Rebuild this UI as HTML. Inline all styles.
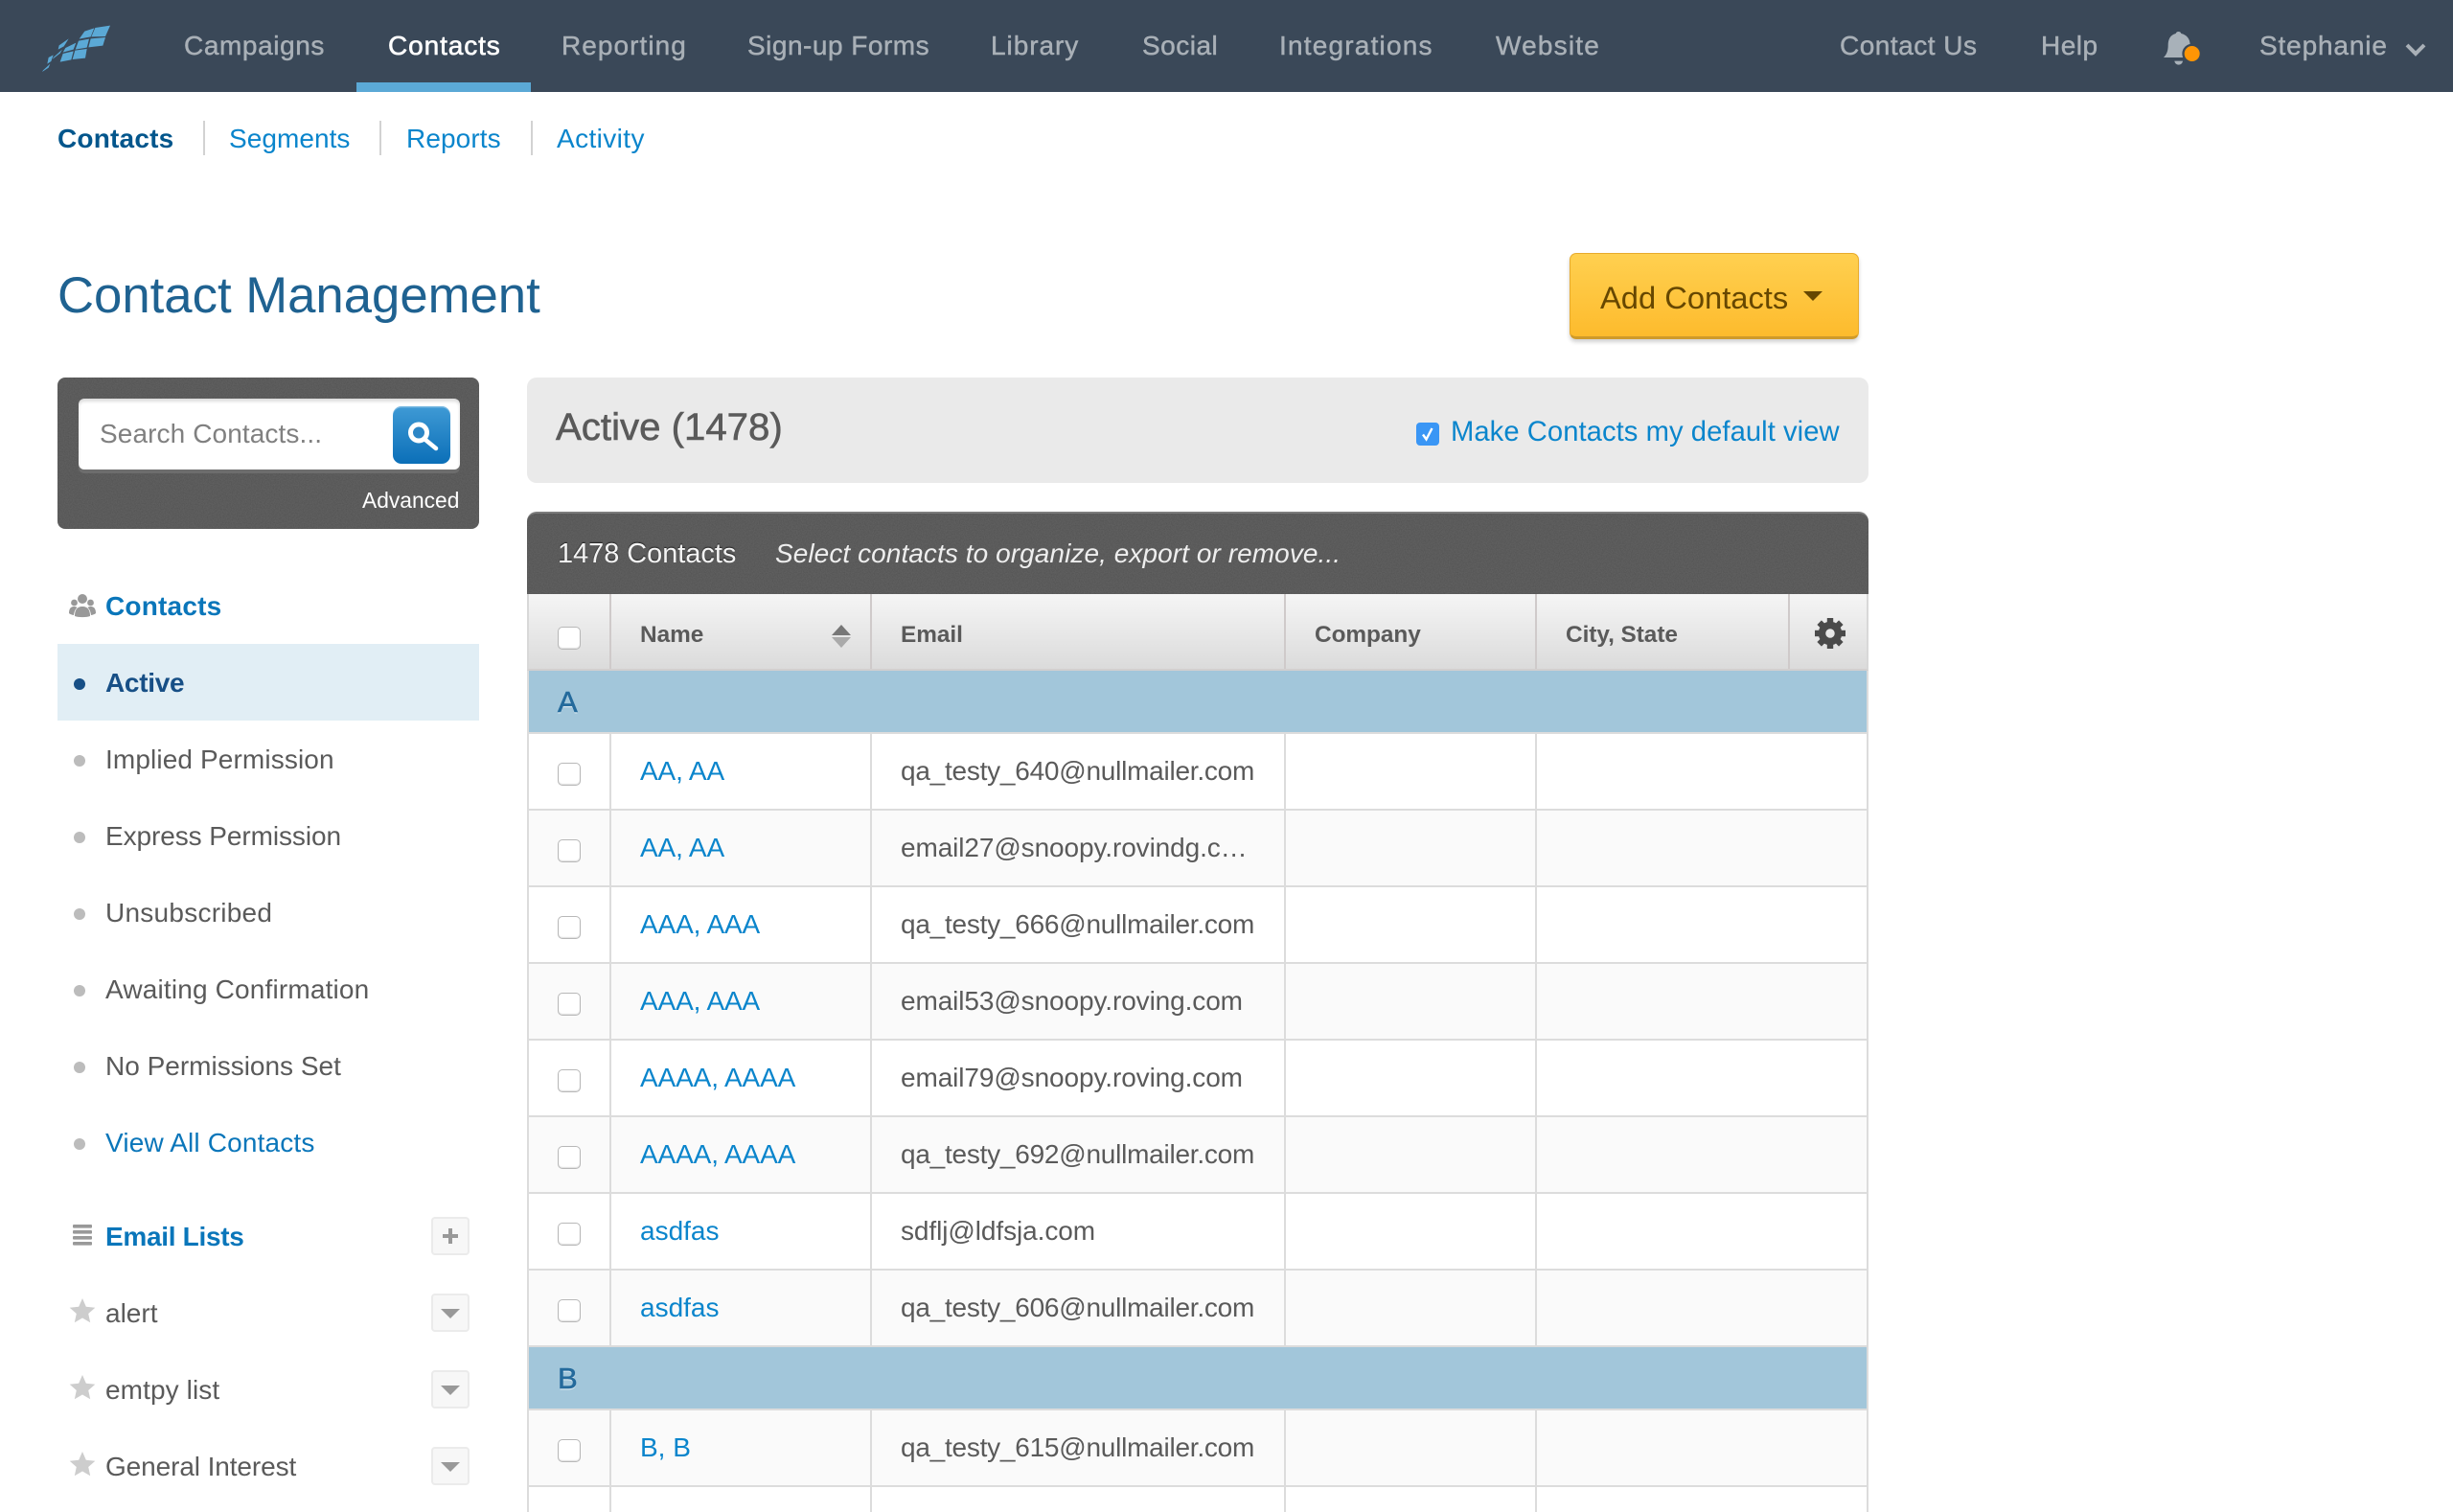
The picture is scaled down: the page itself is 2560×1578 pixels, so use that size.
<!DOCTYPE html>
<html lang="en"><head><meta charset="utf-8"><title>Contact Management</title>
<style>
html,body{margin:0;padding:0;background:#fff;width:2560px;height:1578px;overflow:hidden}
body{position:relative;font-family:"Liberation Sans",sans-serif;color:#5a5a5a}
#p{position:absolute;left:0;top:0;width:2560px;height:1578px;overflow:hidden;background:#fff}
#p div,#p a,#p span,#p svg{position:absolute;box-sizing:border-box}
.t{white-space:nowrap;line-height:40px;font-size:28px;text-decoration:none}
.nav{top:28px;color:#a9b0b7;letter-spacing:.5px;-webkit-text-stroke:.45px #a9b0b7}
.lnk{color:#0a85cc;letter-spacing:-.12px}
.e{letter-spacing:-.24px}
.b{font-weight:700}
.hd{color:#0a76ba;font-weight:700}
.dot{left:77px;width:12px;height:12px;border-radius:50%;background:#bcbcbc}
.sb{left:450px;width:40px;height:40px;background:#f7f7f7;border:2px solid #ebebeb;border-radius:4px}
.car{left:8px;top:14px;width:0;height:0;border-left:10px solid transparent;border-right:10px solid transparent;border-top:10px solid #999}
.v{width:2px;background:#dcdcdc}
.row{left:552px;width:1396px;height:80px;border-bottom:2px solid #dcdcdc;background:#fff}
.row.g{background:#fafafa}
.cb{left:582px;width:24px;height:24px;background:#fff;border:1.5px solid #b8b8b8;border-radius:5px;box-shadow:inset 0 -1px 1px #e0e0e0}
.th{top:643px;font-size:24.4px;font-weight:700;color:#5a5a5a;letter-spacing:-.05px}
.grp{left:552px;width:1396px;background:#a2c6da}
.gl{font-size:31px;color:#246a9c;text-shadow:0 1.5px 0 rgba(255,255,255,.55);-webkit-text-stroke:.6px #246a9c}
.sep{top:126px;width:2px;height:36px;background:#d2d2d2}
</style></head><body>
<div id="p">

<svg width="0" height="0" style="left:0;top:0"><filter id="n"><feTurbulence type="fractalNoise" baseFrequency=".8" numOctaves="2" seed="3"/><feColorMatrix values="0 0 0 0 0 0 0 0 0 0 0 0 0 0 0 0 0 0 .2 -.06"/></filter></svg>

<!-- top nav -->
<div style="left:0;top:0;width:2560px;height:96px;background:#3a4858"></div>
<svg style="left:20px;top:10px" width="120" height="80" viewBox="0 0 360 240"><g fill="#5ba9d6">
<polygon points="238,57 285,50 270,84 226,85"/><polygon points="205,68 235,58 224,85 188,92"/>
<polygon points="224,91 270,87 262,113 217,118"/><polygon points="186,98 219,92 212,119 176,125"/>
<polygon points="175,128 212,123 207,152 167,156"/><polygon points="145,120 178,104 170,125 137,134"/>
<polygon points="137,138 170,130 163,157 128,164"/><polygon points="125,112 155,91 140,115 122,125"/>
<polygon points="107,150 135,125 128,137 105,155"/><polygon points="92,150 107,142 100,162 88,170"/>
<polygon points="75,190 97,170 92,182 72,195"/></g></svg>
<div style="left:372px;top:86px;width:182px;height:10px;background:#5ba9d6"></div>
<a class="t nav" style="left:192px;letter-spacing:.6px">Campaigns</a>
<a class="t nav" style="left:405px;color:#fff;-webkit-text-stroke:.6px #fff;letter-spacing:.9px">Contacts</a>
<a class="t nav" style="left:586px;letter-spacing:1.05px">Reporting</a>
<a class="t nav" style="left:780px">Sign-up Forms</a>
<a class="t nav" style="left:1034px;letter-spacing:.95px">Library</a>
<a class="t nav" style="left:1192px">Social</a>
<a class="t nav" style="left:1335px;letter-spacing:1.2px">Integrations</a>
<a class="t nav" style="left:1561px;letter-spacing:1.2px">Website</a>
<a class="t nav" style="left:1920px">Contact Us</a>
<a class="t nav" style="left:2130px">Help</a>
<a class="t nav" style="left:2358px;letter-spacing:.85px">Stephanie</a>
<svg style="left:2240px;top:20px" width="90" height="60" viewBox="0 0 270 180">
<path fill="#a8b1b9" d="M92 45a9 9 0 0 1 17 0c18 4 28 18 28 36v15l0 24H54c10-10 14-22 14-38 0-18 6-32 24-37z"/>
<path fill="#a8b1b9" d="M88 131h26c-2 16-24 16-26 0z"/>
<circle cx="143" cy="108" r="31" fill="#3a4858"/><circle cx="143" cy="108" r="24" fill="#ff9505"/></svg>
<svg style="left:2508px;top:42px" width="26" height="18" viewBox="0 0 26 18"><path d="M4 5l9 9 9-9" fill="none" stroke="#a9b0b7" stroke-width="4"/></svg>

<!-- sub nav -->
<a class="t b" style="left:60px;top:125px;color:#03568c;letter-spacing:.2px">Contacts</a>
<div class="sep" style="left:212px"></div>
<a class="t" style="left:239px;top:125px;color:#0a85cc;letter-spacing:.05px">Segments</a>
<div class="sep" style="left:396px"></div>
<a class="t" style="left:424px;top:125px;color:#0a85cc;letter-spacing:.1px">Reports</a>
<div class="sep" style="left:554px"></div>
<a class="t" style="left:581px;top:125px;color:#0a85cc;letter-spacing:.4px">Activity</a>

<div class="t" style="left:60px;top:289px;font-size:52.7px;color:#1f6291">Contact Management</div>

<!-- add contacts -->
<div style="left:1638px;top:264px;width:302px;height:90px;border-radius:7px;background:linear-gradient(#ffd050,#fdbb2d);border:1.5px solid #e8ab2c;border-bottom:3px solid #cf9a2a;box-shadow:0 3px 4px rgba(0,0,0,.18)"></div>
<a class="t" style="left:1670px;top:291px;font-size:32.7px;color:#664700">Add Contacts</a>
<div style="left:1882px;top:304px;width:0;height:0;border-left:10px solid transparent;border-right:10px solid transparent;border-top:10px solid #664700"></div>

<!-- search -->
<div style="left:60px;top:394px;width:440px;height:158px;border-radius:8px;background:#5f5f5f;overflow:hidden"><svg width="440" height="158" style="left:0;top:0"><rect width="440" height="158" filter="url(#n)"/></svg></div>
<div style="left:82px;top:416px;width:398px;height:74px;border-radius:6px;background:#fff;box-shadow:inset 0 3px 3px rgba(0,0,0,.14),0 4px 0 #6d6d6d"></div>
<div class="t" style="left:104px;top:433px;color:#808080;letter-spacing:.1px">Search Contacts...</div>
<div style="left:410px;top:424px;width:60px;height:60px;border-radius:9px;background:linear-gradient(#3f9ad5,#0b6fb8);box-shadow:inset 0 1.5px 0 rgba(255,255,255,.3)"></div>
<svg style="left:410px;top:424px" width="60" height="60"><circle cx="27" cy="27.5" r="8.5" fill="#2c86c6" stroke="#fff" stroke-width="5"/><path d="M34 35l11 9" stroke="#fff" stroke-width="4.5" stroke-linecap="round"/></svg>
<a class="t" style="left:378px;top:502px;font-size:22.8px;color:#fff">Advanced</a>

<!-- sidebar -->
<svg style="left:70px;top:618px" width="32" height="28" viewBox="70 618 32 28"><g fill="#999"><circle cx="86" cy="625" r="5"/><circle cx="77.5" cy="629" r="3.4"/><circle cx="94.5" cy="629" r="3.4"/><path d="M78 643c0-7 3-10 8-10s8 3 8 10c-4 1.500-12 1.500-16 0z"/><path d="M72 640c0-5 2-7 5.500-7 1.500 0 2.500.5 3 1-2 2-3 4-3.500 8-2-.3-4-1-5-2z"/><path d="M100 640c0-5-2-7-5.500-7-1.500 0-2.500.5-3 1 2 2 3 4 3.500 8 2-.3 4-1 5-2z"/></g></svg>
<a class="t hd" style="left:110px;top:613px;letter-spacing:.2px">Contacts</a>
<div style="left:60px;top:672px;width:440px;height:80px;background:#e1eef5"></div>
<div class="dot" style="top:708px;background:#174f86"></div>
<a class="t b" style="left:110px;top:693px;color:#174f86;letter-spacing:-.3px">Active</a>
<div class="dot" style="top:788px"></div><a class="t" style="left:110px;top:773px;color:#5a5a5a;letter-spacing:.12px">Implied Permission</a>
<div class="dot" style="top:868px"></div><a class="t" style="left:110px;top:853px;color:#5a5a5a;letter-spacing:-.08px">Express Permission</a>
<div class="dot" style="top:948px"></div><a class="t" style="left:110px;top:933px;color:#5a5a5a;letter-spacing:.25px">Unsubscribed</a>
<div class="dot" style="top:1028px"></div><a class="t" style="left:110px;top:1013px;color:#5a5a5a;letter-spacing:.17px">Awaiting Confirmation</a>
<div class="dot" style="top:1108px"></div><a class="t" style="left:110px;top:1093px;color:#5a5a5a">No Permissions Set</a>
<div class="dot" style="top:1188px"></div><a class="t" style="left:110px;top:1173px;color:#0a76ba;letter-spacing:.16px">View All Contacts</a>

<svg style="left:76px;top:1278px" width="20" height="22"><g fill="#999"><rect width="20" height="3.600" y="0" rx="1"/><rect width="20" height="3.600" y="6" rx="1"/><rect width="20" height="3.600" y="12" rx="1"/><rect width="20" height="3.600" y="18" rx="1"/></g></svg>
<a class="t hd" style="left:110px;top:1271px;letter-spacing:-.3px">Email Lists</a>
<div class="sb" style="top:1270px"></div>
<svg style="left:450px;top:1270px" width="40" height="40"><path d="M20 12v16M12 20h16" stroke="#999" stroke-width="4"/></svg>

<svg style="left:72px;top:1355px" width="28" height="28" viewBox="-14 -14 28 28"><polygon fill="#cdcdcd" points="0,-14 3.800,-5.300 13.300,-4.300 6.200,2 8.200,11.300 0,6.500 -8.200,11.300 -6.200,2 -13.300,-4.300 -3.800,-5.300"/></svg>
<a class="t" style="left:110px;top:1351px;color:#5a5a5a">alert</a>
<div class="sb" style="top:1350px"><div class="car"></div></div>
<svg style="left:72px;top:1435px" width="28" height="28" viewBox="-14 -14 28 28"><polygon fill="#cdcdcd" points="0,-14 3.800,-5.300 13.300,-4.300 6.200,2 8.200,11.300 0,6.500 -8.200,11.300 -6.200,2 -13.300,-4.300 -3.800,-5.300"/></svg>
<a class="t" style="left:110px;top:1431px;color:#5a5a5a;letter-spacing:.1px">emtpy list</a>
<div class="sb" style="top:1430px"><div class="car"></div></div>
<svg style="left:72px;top:1515px" width="28" height="28" viewBox="-14 -14 28 28"><polygon fill="#cdcdcd" points="0,-14 3.800,-5.300 13.300,-4.300 6.200,2 8.200,11.300 0,6.500 -8.200,11.300 -6.200,2 -13.300,-4.300 -3.800,-5.300"/></svg>
<a class="t" style="left:110px;top:1511px;color:#5a5a5a;letter-spacing:-.1px">General Interest</a>
<div class="sb" style="top:1510px"><div class="car"></div></div>

<!-- active panel -->
<div style="left:550px;top:394px;width:1400px;height:110px;border-radius:10px;background:#eaeaea"></div>
<div class="t" style="left:580px;top:426px;font-size:40.2px;color:#5a5a5a;-webkit-text-stroke:.6px #5a5a5a">Active (1478)</div>
<div style="left:1478px;top:441px;width:24px;height:24px;border-radius:4px;background:#3a96f5"></div>
<svg style="left:1478px;top:441px" width="24" height="24"><path d="M7 12.500l3.500 5L16.500 6" fill="none" stroke="#fff" stroke-width="2.400"/></svg>
<a class="t" style="left:1514px;top:431px;font-size:29.2px;color:#0a85cc;letter-spacing:.06px">Make Contacts my default view</a>

<!-- toolbar -->
<div style="left:550px;top:534px;width:1400px;height:86px;border-radius:10px 10px 0 0;background:#5f5f5f;border-top:2px solid #7c7c7c;overflow:hidden"><svg width="1400" height="86" style="left:0;top:0"><rect width="1400" height="86" filter="url(#n)"/></svg></div>
<div class="t" style="left:582px;top:558px;font-size:28.9px;color:#f4f4f4;text-shadow:0 -1px 1px #222">1478 Contacts</div>
<div class="t" style="left:809px;top:558px;font-style:italic;color:#eee;letter-spacing:.07px">Select contacts to organize, export or remove...</div>

<!-- table head -->
<div style="left:550px;top:620px;width:1400px;height:80px;background:linear-gradient(#f5f5f5,#dbdbdb);border-left:2px solid #d8d8d8;border-right:2px solid #d8d8d8;border-bottom:2px solid #d2cfcf"></div>
<div class="v" style="left:636px;top:620px;height:78px;background:#cfcaca"></div>
<div class="v" style="left:908px;top:620px;height:78px;background:#cfcaca"></div>
<div class="v" style="left:1340px;top:620px;height:78px;background:#cfcaca"></div>
<div class="v" style="left:1602px;top:620px;height:78px;background:#cfcaca"></div>
<div class="v" style="left:1866px;top:620px;height:78px;background:#cfcaca"></div>
<div class="cb" style="top:654px"></div>
<div class="t th" style="left:668px">Name</div>
<div style="left:868px;top:652px;width:0;height:0;border-left:10px solid transparent;border-right:10px solid transparent;border-bottom:11px solid #777"></div>
<div style="left:868px;top:665px;width:0;height:0;border-left:10px solid transparent;border-right:10px solid transparent;border-top:11px solid #aaa"></div>
<div class="t th" style="left:940px">Email</div>
<div class="t th" style="left:1372px">Company</div>
<div class="t th" style="left:1634px">City, State</div>
<svg style="left:1892px;top:642px" width="36" height="38" viewBox="-18 -19 36 38"><g fill="#4a4a4a"><rect x="-3.200" y="-16" width="6.400" height="8"/><rect x="-3.200" y="-16" width="6.400" height="8" transform="rotate(45)"/><rect x="-3.200" y="-16" width="6.400" height="8" transform="rotate(90)"/><rect x="-3.200" y="-16" width="6.400" height="8" transform="rotate(135)"/><rect x="-3.200" y="-16" width="6.400" height="8" transform="rotate(180)"/><rect x="-3.200" y="-16" width="6.400" height="8" transform="rotate(225)"/><rect x="-3.200" y="-16" width="6.400" height="8" transform="rotate(270)"/><rect x="-3.200" y="-16" width="6.400" height="8" transform="rotate(315)"/></g><circle r="8.500" fill="none" stroke="#4a4a4a" stroke-width="7.500"/></svg>

<!-- rows -->
<div class="row" style="top:766px"></div>
<div class="row g" style="top:846px"></div>
<div class="row" style="top:926px"></div>
<div class="row g" style="top:1006px"></div>
<div class="row" style="top:1086px"></div>
<div class="row g" style="top:1166px"></div>
<div class="row" style="top:1246px"></div>
<div class="row g" style="top:1326px"></div>
<div class="row g" style="top:1472px"></div>
<div class="row" style="top:1552px;height:26px;border-bottom:0"></div>

<div class="v" style="left:550px;top:700px;height:878px"></div>
<div class="v" style="left:1948px;top:700px;height:878px"></div>
<div class="v" style="left:636px;top:766px;height:812px"></div>
<div class="v" style="left:908px;top:766px;height:812px"></div>
<div class="v" style="left:1340px;top:766px;height:812px"></div>
<div class="v" style="left:1602px;top:766px;height:812px"></div>

<div class="grp" style="top:700px;height:64px"></div>
<div style="left:552px;top:764px;width:1396px;height:2px;background:#dcdcdc"></div>
<div class="t gl" style="left:582px;top:713px">A</div>
<div style="left:552px;top:1404px;width:1396px;height:2px;background:#dcdcdc"></div>
<div class="grp" style="top:1406px;height:64px"></div>
<div style="left:552px;top:1470px;width:1396px;height:2px;background:#dcdcdc"></div>
<div class="t gl" style="left:582px;top:1419px">B</div>

<div class="cb" style="top:796px"></div><a class="t lnk" style="left:668px;top:785px">AA, AA</a><div class="t e" style="left:940px;top:785px">qa_testy_640@nullmailer.com</div>
<div class="cb" style="top:876px"></div><a class="t lnk" style="left:668px;top:865px">AA, AA</a><div class="t e" style="left:940px;top:865px;letter-spacing:-.1px">email27@snoopy.rovindg.c…</div>
<div class="cb" style="top:956px"></div><a class="t lnk" style="left:668px;top:945px">AAA, AAA</a><div class="t e" style="left:940px;top:945px">qa_testy_666@nullmailer.com</div>
<div class="cb" style="top:1036px"></div><a class="t lnk" style="left:668px;top:1025px">AAA, AAA</a><div class="t e" style="left:940px;top:1025px;letter-spacing:-.1px">email53@snoopy.roving.com</div>
<div class="cb" style="top:1116px"></div><a class="t lnk" style="left:668px;top:1105px">AAAA, AAAA</a><div class="t e" style="left:940px;top:1105px;letter-spacing:-.1px">email79@snoopy.roving.com</div>
<div class="cb" style="top:1196px"></div><a class="t lnk" style="left:668px;top:1185px">AAAA, AAAA</a><div class="t e" style="left:940px;top:1185px">qa_testy_692@nullmailer.com</div>
<div class="cb" style="top:1276px"></div><a class="t lnk" style="left:668px;top:1265px;letter-spacing:0">asdfas</a><div class="t e" style="left:940px;top:1265px;letter-spacing:-.08px">sdflj@ldfsja.com</div>
<div class="cb" style="top:1356px"></div><a class="t lnk" style="left:668px;top:1345px;letter-spacing:0">asdfas</a><div class="t e" style="left:940px;top:1345px">qa_testy_606@nullmailer.com</div>
<div class="cb" style="top:1502px"></div><a class="t lnk" style="left:668px;top:1491px;letter-spacing:0">B, B</a><div class="t e" style="left:940px;top:1491px">qa_testy_615@nullmailer.com</div>

</div>
</body></html>
